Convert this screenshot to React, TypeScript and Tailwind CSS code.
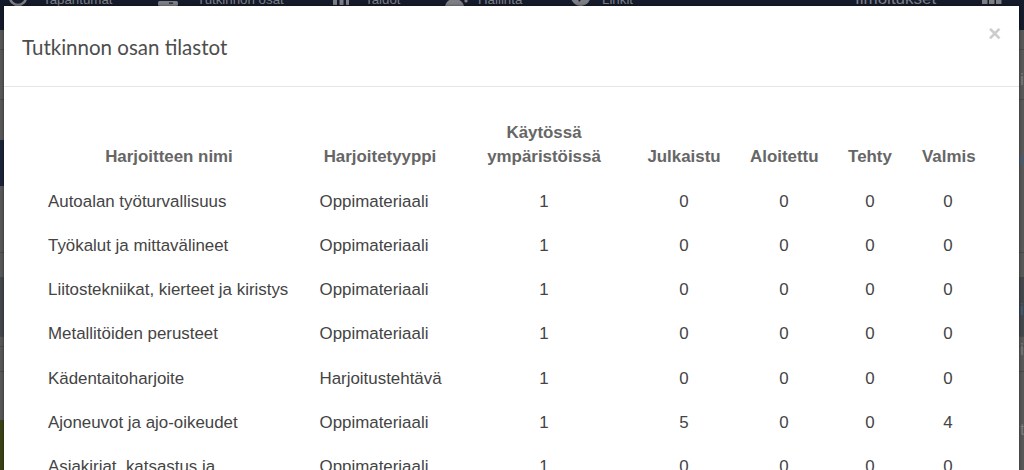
import React from "react";

const Ring = () => (
  <svg width="20" height="20" viewBox="0 0 20 20" fill="none" stroke="currentColor" strokeWidth="2.6"><circle cx="10" cy="-3" r="8" /></svg>
);
const Pill = () => (
  <svg width="20" height="20" viewBox="0 0 20 20" fill="currentColor"><rect x="0" y="1" width="20" height="5" rx="1.5" /><rect x="11" y="2.5" width="4" height="1.2" fill="#151b2b" /></svg>
);
const Bars = () => (
  <svg width="18" height="20" viewBox="0 0 18 20" fill="currentColor"><rect x="1" y="-2" width="4" height="7" /><rect x="7.5" y="-2" width="4" height="7" /><rect x="14" y="-2" width="3" height="7" /></svg>
);
const Person = () => (
  <svg width="26" height="20" viewBox="0 0 26 20" fill="currentColor"><path d="M2 6 C3 2 6 0 8 -1 H14 C17 0 20 2 21 6 Z" /><circle cx="23" cy="1" r="1.6" /></svg>
);
const Globe = () => (
  <svg width="20" height="20" viewBox="0 0 20 20" fill="currentColor"><path d="M1 -1 H8 L9 2 L12 -1 H20 C19 3 15 6 10 6 C6 6 3 3 1 -1 Z" /></svg>
);
const Squares = () => (
  <svg width="20" height="20" viewBox="0 0 20 20" fill="currentColor"><rect x="0" y="-2" width="5.5" height="6" /><rect x="7" y="-2" width="5.5" height="6" /><rect x="14" y="-2" width="5.5" height="6" /></svg>
);

const navItems = [
  { label: "Tapahtumat", Icon: Ring, cls: "ml-[8px] w-[150px]", gap: "gap-[15px]" },
  { label: "Tutkinnon osat", Icon: Pill, cls: "w-[174px]", gap: "gap-[19px]" },
  { label: "Taidot", Icon: Bars, cls: "w-[111px]", gap: "gap-[15px]" },
  { label: "Hallinta", Icon: Person, cls: "w-[127px]", gap: "gap-[9px]" },
  { label: "Linkit", Icon: Globe, cls: "w-[100px]", gap: "gap-[12px]" },
];

const rows = [
  ["Autoalan työturvallisuus", "Oppimateriaali", "1", "0", "0", "0", "0"],
  ["Työkalut ja mittavälineet", "Oppimateriaali", "1", "0", "0", "0", "0"],
  ["Liitostekniikat, kierteet ja kiristys", "Oppimateriaali", "1", "0", "0", "0", "0"],
  ["Metallitöiden perusteet", "Oppimateriaali", "1", "0", "0", "0", "0"],
  ["Kädentaitoharjoite", "Harjoitustehtävä", "1", "0", "0", "0", "0"],
  ["Ajoneuvot ja ajo-oikeudet", "Oppimateriaali", "1", "5", "0", "0", "4"],
  ["Asiakirjat, katsastus ja", "Oppimateriaali", "1", "0", "0", "0", "0"],
];

export default function App() {
  return (
    <div className="relative h-[470px] w-[1024px] overflow-hidden bg-[#585858] font-['Liberation_Sans',sans-serif]">
      <header className="flex h-[30px] items-start overflow-hidden bg-[#151b2b] text-[#7d7f85]">
        <nav className="flex h-[20px] items-start text-[13.3px]">
          {navItems.map(({ label, Icon, cls, gap }) => (
            <div key={label} className={`flex items-start ${gap} ${cls}`}>
              <Icon />
              <span className="-mt-[10px] leading-[20px]">{label}</span>
            </div>
          ))}
        </nav>
        <div className="ml-[185px] flex items-start gap-[46px] text-[17px]">
          <span className="-mt-[12px] leading-[22px]">Ilmoitukset</span>
          <Squares />
        </div>
      </header>
      <div className="flex flex-col">
        <div className="h-[20px] border-b border-[#4a4a4a]" />
        <div className="h-[50px] border-b border-[#4a4a4a]" />
        <div className="h-[40px]" />
        <div className="h-[46px] w-[10px] bg-[#1a2338]" />
        <div className="h-[67px] border-b border-[#4a4a4a]" />
        <div className="h-[24px]" />
        <div className="h-[60px] border-b border-[#4a4a4a] bg-[#43474b]" />
        <div className="h-[10px] border-b border-[#4a4a4a]" />
        <div className="h-[25px] border-b border-[#4a4a4a]" />
        <div className="h-[48px]" />
        <div className="h-[50px] w-[10px] bg-[#3c4216]" />
      </div>

      <span className="absolute left-[1020px] top-[70px] text-[17px] leading-[20px] text-[#7b7b7b]">i</span>
      <span className="absolute left-[1020px] top-[150px] text-[17px] leading-[20px] text-[#3f5f80]">e</span>
      <span className="absolute left-[1020px] top-[300px] text-[17px] leading-[20px] text-[#3f5f80]">i</span>
      <span className="absolute left-[1020px] top-[340px] text-[17px] leading-[20px] text-[#7b7b7b]">i</span>
      <span className="absolute left-[1020px] top-[420px] text-[17px] leading-[20px] text-[#7b7b7b]">t</span>

      <section className="absolute left-[4px] top-[6px] w-[1015px] bg-white shadow-[0_0_3px_rgba(0,0,0,0.5)]">
        <div className="relative flex h-[81px] items-center border-b border-[#e5e5e5] px-[18px] pt-[2px]">
          <h2 className="font-['Lato',sans-serif] text-[20.5px] font-normal text-[#4d4d4d]">Tutkinnon osan tilastot</h2>
          <span className="absolute right-[18px] top-[16px] text-[22px] leading-[24px] font-bold text-[#cccccc]">×</span>
        </div>
        <div className="px-[34px] pt-[24px]">
          <table className="w-[946px] table-fixed border-collapse text-[16.9px] leading-[24.28px] text-[#444444]">
            <colgroup>
              <col className="w-[262px]" />
              <col className="w-[160px]" />
              <col className="w-[168px]" />
              <col className="w-[112px]" />
              <col className="w-[88px]" />
              <col className="w-[84px]" />
              <col className="w-[72px]" />
            </colgroup>
            <thead>
              <tr className="text-center align-bottom font-bold text-[#666666]">
                <th className="px-[10px] py-[10px]">Harjoitteen nimi</th>
                <th className="px-[10px] py-[10px]">Harjoitetyyppi</th>
                <th className="px-[10px] py-[10px]">Käytössä ympäristöissä</th>
                <th className="px-[10px] py-[10px]">Julkaistu</th>
                <th className="px-[10px] py-[10px]">Aloitettu</th>
                <th className="px-[10px] py-[10px]">Tehty</th>
                <th className="px-[10px] py-[10px]">Valmis</th>
              </tr>
            </thead>
            <tbody>
              {rows.map((r) => (
                <tr key={r[0]} className="align-top">
                  <td className="whitespace-nowrap py-[10px] pl-[10px]">{r[0]}</td>
                  <td className="whitespace-nowrap py-[10px] pl-[19.5px]">{r[1]}</td>
                  {r.slice(2).map((v, i) => (
                    <td key={i} className="py-[10px] text-center">{v}</td>
                  ))}
                </tr>
              ))}
            </tbody>
          </table>
        </div>
      </section>
    </div>
  );
}
